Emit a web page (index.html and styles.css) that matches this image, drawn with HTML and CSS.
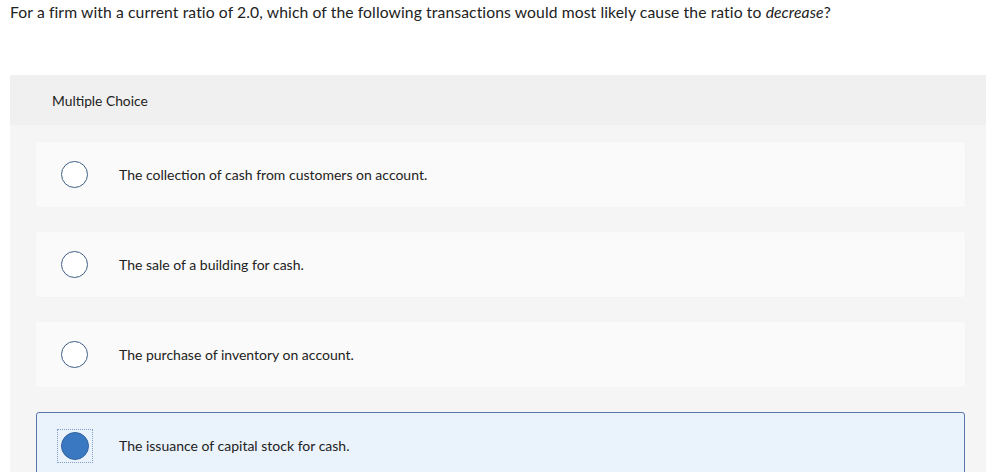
FILE: index.html
```html
<!DOCTYPE html>
<html>
<head>
<meta charset="utf-8">
<link rel="stylesheet" href="styles.css">
</head>
<body>
<p class="question">For a firm with a current ratio of 2.0, which of the following transactions would most likely cause the ratio to <em>decrease</em>?</p>
<div class="panel">
  <div class="panel-header">Multiple Choice</div>
  <div class="options">
    <div class="option"><span class="radio"></span><span class="label">The collection of cash from customers on account.</span></div>
    <div class="option"><span class="radio"></span><span class="label">The sale of a building for cash.</span></div>
    <div class="option"><span class="radio"></span><span class="label">The purchase of inventory on account.</span></div>
    <div class="option selected"><span class="focus"><span class="radio"></span></span><span class="label">The issuance of capital stock for cash.</span></div>
  </div>
</div>
</body>
</html>
```
FILE: styles.css
```css
html, body {
  margin: 0;
  padding: 0;
  background: #ffffff;
  font-family: "Lato", "Open Sans", sans-serif;
  color: #222;
  overflow: hidden;
}
.question {
  margin: 0;
  padding: 3px 10px 0 10px;
  height: 75px;
  box-sizing: border-box;
  font-size: 15.7px;
  letter-spacing: 0.1px;
  color: #222;
}
.question em {
  font-style: italic;
}
.panel {
  margin-left: 10px;
  background: #f5f5f5;
  height: 420px;
}
.panel-header {
  height: 50px;
  background: #f0f0f0;
  display: flex;
  align-items: center;
  padding-left: 42px;
  font-size: 13.8px;
  color: #222;
}
.options {
  display: flex;
  flex-direction: column;
  gap: 25px;
  padding: 17px 21px 0 26px;
}
.option {
  height: 65px;
  box-sizing: border-box;
  background: #fafafa;
  border-radius: 3px;
  display: flex;
  align-items: center;
  padding-left: 25px;
  box-shadow: 0 0 1px rgba(0,0,0,0.04);
}
.radio {
  width: 27px;
  height: 27px;
  box-sizing: border-box;
  border: 1.5px solid #3f5f86;
  border-radius: 50%;
  background: #fff;
  flex: none;
}
.label {
  margin-left: 31px;
  font-size: 14px;
  color: #222;
}
.option.selected {
  height: 67px;
  background: #eaf2fb;
  border: 1px solid #5977ad;
  padding-left: 20px;
}
.focus {
  display: flex;
  align-items: center;
  justify-content: center;
  width: 36px;
  height: 34px;
  box-sizing: border-box;
  border: 1.5px dotted #7f9fc8;
  flex: none;
}
.selected .radio {
  width: 28px;
  height: 28px;
  background: #3b78c2;
  border: 1px solid #33649f;
}
.selected .label {
  margin-left: 26px;
}
```
